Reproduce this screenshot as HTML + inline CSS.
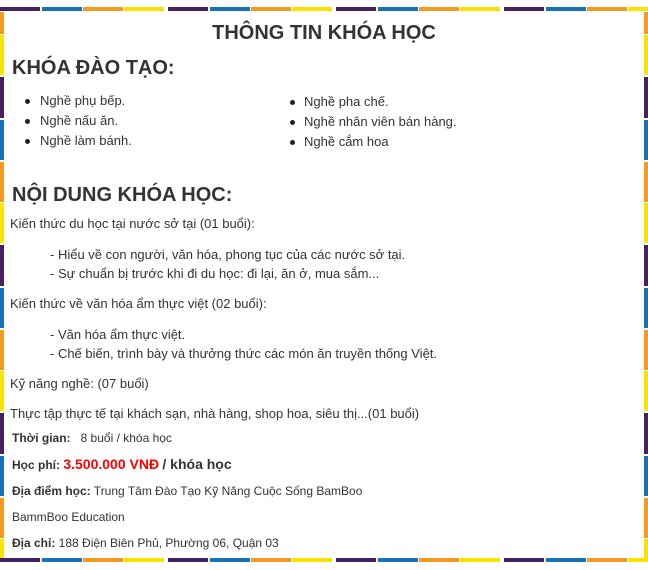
<!DOCTYPE html>
<html><head><meta charset="utf-8"><style>
html,body{margin:0;padding:0;background:#fff;}
body{width:648px;height:570px;position:relative;overflow:hidden;font-family:"Liberation Sans",Arial,sans-serif;color:#333;}
.h{position:absolute;left:0;width:648px;height:4px;
background:repeating-linear-gradient(90deg,#47205e 0 40px,#fff 40px 42px,#1673b6 42px 82px,#fff 82px 83px,#f5991f 83px 123px,#fff 123px 124px,#f7e400 124px 164px,#fff 164px 168px);}
.v{position:absolute;top:12px;width:4px;height:546px;
background:repeating-linear-gradient(180deg,#f5991f 0 22px,#fff 22px 23px,#f7e400 23px 63px,#fff 63px 65px,#47205e 65px 106px,#fff 106px 108px,#1673b6 108px 148px,#fff 148px 150px,#f5991f 150px 168px);}
.t{position:absolute;white-space:nowrap;font-size:13px;line-height:16px;}
.b{font-weight:bold;}
.dot{position:absolute;width:5px;height:5px;border-radius:50%;background:#222;}
</style></head><body>
<div class="h" style="top:7px"></div>
<div class="h" style="top:558px"></div>
<div class="v" style="left:0"></div>
<div class="v" style="left:644px"></div>

<div class="t b" style="left:0;width:648px;text-align:center;top:21px;font-size:20px;line-height:24px;">THÔNG TIN KHÓA HỌC</div>
<div class="t b" style="left:12px;top:56px;font-size:20px;line-height:24px;">KHÓA ĐÀO TẠO:</div>

<div class="dot" style="left:25px;top:99px"></div><div class="t" style="left:40px;top:93px">Nghề phụ bếp.</div>
<div class="dot" style="left:25px;top:119px"></div><div class="t" style="left:40px;top:113px">Nghề nấu ăn.</div>
<div class="dot" style="left:25px;top:139px"></div><div class="t" style="left:40px;top:133px">Nghề làm bánh.</div>
<div class="dot" style="left:290px;top:100px"></div><div class="t" style="left:304px;top:94px">Nghề pha chế.</div>
<div class="dot" style="left:290px;top:120px"></div><div class="t" style="left:304px;top:114px">Nghề nhân viên bán hàng.</div>
<div class="dot" style="left:290px;top:140px"></div><div class="t" style="left:304px;top:134px">Nghề cắm hoa</div>

<div class="t b" style="left:12px;top:183px;font-size:20px;line-height:24px;">NỘI DUNG KHÓA HỌC:</div>
<div class="t" style="left:10px;top:216px">Kiến thức du học tại nước sở tại (01 buổi):</div>
<div class="t" style="left:50px;top:247px">- Hiểu về con người, văn hóa, phong tục của các nước sở tại.</div>
<div class="t" style="left:50px;top:266px">- Sự chuẩn bị trước khi đi du học: đi lại, ăn ở, mua sắm...</div>
<div class="t" style="left:10px;top:296px">Kiến thức về văn hóa ẩm thực việt (02 buổi):</div>
<div class="t" style="left:50px;top:327px">- Văn hóa ẩm thực việt.</div>
<div class="t" style="left:50px;top:346px">- Chế biến, trình bày và thưởng thức các món ăn truyền thống Việt.</div>
<div class="t" style="left:10px;top:376px">Kỹ năng nghề: (07 buổi)</div>
<div class="t" style="left:10px;top:406px">Thực tập thực tế tại khách sạn, nhà hàng, shop hoa, siêu thị...(01 buổi)</div>
<div class="t" style="left:12px;top:430px;font-size:12px"><b>Thời gian:</b> &nbsp; 8 buổi / khóa học</div>
<div class="t" style="left:12px;top:456px;font-size:12px"><b>Học phí: <span style="color:#f00;font-size:14px">3.500.000 VNĐ</span> <span style="font-size:14px">/ khóa học</span></b></div>
<div class="t" style="left:12px;top:483px;font-size:12px"><b>Địa điểm học:</b> Trung Tâm Đào Tạo Kỹ Năng Cuộc Sống BamBoo</div>
<div class="t" style="left:12px;top:509px;font-size:12px">BammBoo Education</div>
<div class="t" style="left:12px;top:535px;font-size:12px"><b>Địa chỉ:</b> 188 Điện Biên Phủ, Phường 06, Quận 03</div>
</body></html>
